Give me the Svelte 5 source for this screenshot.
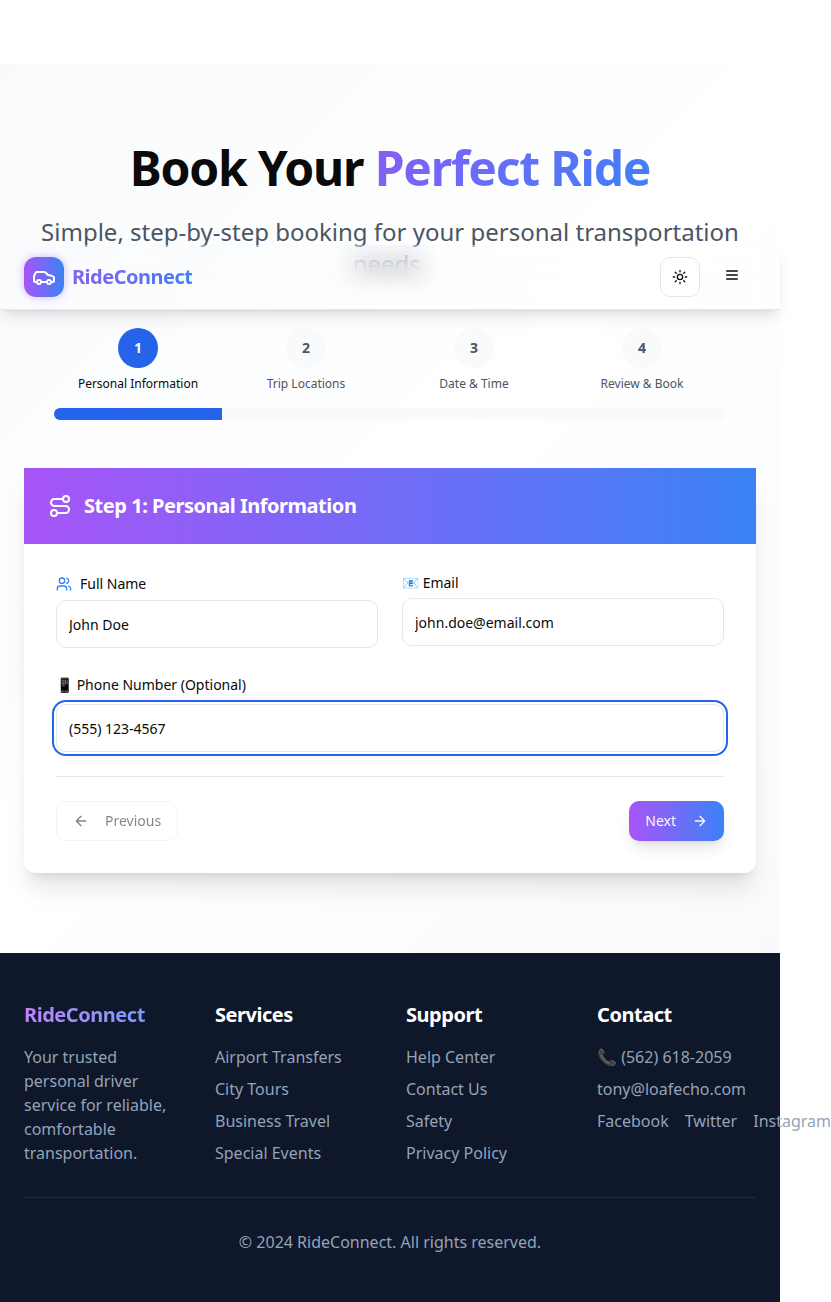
<script>
  const steps = ['Personal Information', 'Trip Locations', 'Date & Time', 'Review & Book'];
  const services = ['Airport Transfers', 'City Tours', 'Business Travel', 'Special Events'];
  const support = ['Help Center', 'Contact Us', 'Safety', 'Privacy Policy'];
  const social = ['Facebook', 'Twitter', 'Instagram'];
  let current = $state(1);
  let name = $state('John Doe');
  let email = $state('john.doe@email.com');
  let phone = $state('(555) 123-4567');
</script>

<div class="page">
  <nav>
    <a class="brand" href="#home">
      <span class="logo">
        <svg width="24" height="24" viewBox="0 0 24 24"><path d="M19 17h2c.6 0 1-.4 1-1v-3c0-.9-.7-1.7-1.5-1.9C18.7 10.6 16 10 16 10s-1.3-1.4-2.2-2.3c-.5-.4-1.1-.7-1.8-.7H5c-.6 0-1.1.4-1.4.9l-1.4 2.9A3.7 3.7 0 0 0 2 12v4c0 .6.4 1 1 1h2" /><circle cx="7" cy="17" r="2" /><path d="M9 17h6" /><circle cx="17" cy="17" r="2" /></svg>
      </span>
      <span class="gradient">RideConnect</span>
    </a>
    <div class="actions">
      <button class="theme" aria-label="Toggle theme">
        <svg width="16" height="16" viewBox="0 0 24 24"><circle cx="12" cy="12" r="4" /><path d="M12 2v2M12 20v2m-7.07-17.07 1.41 1.41m11.32 11.32 1.41 1.41M2 12h2M20 12h2M6.34 17.66l-1.41 1.41M19.07 4.93l-1.41 1.41" /></svg>
      </button>
      <button class="menu" aria-label="Open menu">
        <svg width="16" height="16" viewBox="0 0 24 24"><path d="M4 6h16M4 12h16M4 18h16" /></svg>
      </button>
    </div>
  </nav>

  <main>
    <header>
      <h1>Book Your <span class="gradient">Perfect Ride</span></h1>
      <p>Simple, step-by-step booking for your personal transportation needs.</p>
    </header>

    <div class="progress">
      <ol>
        {#each steps as step, i}
          <li class:active={i + 1 === current}>
            <span class="dot">{i + 1}</span>
            <span class="caption">{step}</span>
          </li>
        {/each}
      </ol>
      <div class="track"><div class="fill" style="width: {(current / steps.length) * 100}%"></div></div>
    </div>

    <section class="card">
      <div class="card-head">
        <svg width="24" height="24" viewBox="0 0 24 24"><circle cx="6" cy="19" r="3" /><path d="M9 19h8.5a3.5 3.5 0 0 0 0-7h-11a3.5 3.5 0 0 1 0-7H15" /><circle cx="18" cy="5" r="3" /></svg>
        <h2>Step {current}: {steps[current - 1]}</h2>
      </div>
      <div class="card-body">
        <div class="fields">
          <div class="field">
            <label for="name" class="with-icon">
              <svg width="16" height="16" viewBox="0 0 24 24"><path d="M16 21v-2a4 4 0 0 0-4-4H6a4 4 0 0 0-4 4v2" /><circle cx="9" cy="7" r="4" /><path d="M22 21v-2a4 4 0 0 0-3-3.87M16 3.13a4 4 0 0 1 0 7.75" /></svg>
              Full Name
            </label>
            <input id="name" bind:value={name} />
          </div>
          <div class="field">
            <label for="email">📧 Email</label>
            <input id="email" type="email" bind:value={email} />
          </div>
        </div>
        <div class="field phone">
          <div class="label-line"><label for="phone">📱 Phone Number (Optional)</label></div>
          <input id="phone" class="focused" type="tel" bind:value={phone} />
        </div>
        <div class="buttons">
          <button class="prev" disabled>
            <svg width="16" height="16" viewBox="0 0 24 24"><path d="m12 19-7-7 7-7M19 12H5" /></svg>
            Previous
          </button>
          <button class="next">
            Next
            <svg width="16" height="16" viewBox="0 0 24 24"><path d="M5 12h14M12 5l7 7-7 7" /></svg>
          </button>
        </div>
      </div>
    </section>
  </main>

  <footer>
    <div class="columns">
      <div>
        <h3 class="gradient light">RideConnect</h3>
        <p>Your trusted personal driver service for reliable, comfortable transportation.</p>
      </div>
      <div>
        <h3>Services</h3>
        <ul>{#each services as item}<li>{item}</li>{/each}</ul>
      </div>
      <div>
        <h3>Support</h3>
        <ul>{#each support as item}<li>{item}</li>{/each}</ul>
      </div>
      <div>
        <h3>Contact</h3>
        <ul>
          <li>📞 (562) 618-2059</li>
          <li>tony@loafecho.com</li>
          <li class="social">{#each social as item}<span>{item}</span>{/each}</li>
        </ul>
      </div>
    </div>
    <div class="legal">© 2024 RideConnect. All rights reserved.</div>
  </footer>
</div>

<style>
  :global(body) {
    background: #fff;
    overflow-x: hidden;
  }
  .page, .page * { box-sizing: border-box; }
  .page {
    position: relative;
    width: 780px;
    padding-top: 64px;
    font: 16px/24px "Noto Sans", sans-serif;
    color: #0a0a0a;
  }
  h1, h2, h3, p, ul, ol { margin: 0; padding: 0; list-style: none; }
  button, input { font: inherit; color: inherit; margin: 0; }
  svg {
    display: block;
    flex: none;
    fill: none;
    stroke: currentColor;
    stroke-width: 2;
    stroke-linecap: round;
    stroke-linejoin: round;
  }
  .gradient {
    background: linear-gradient(135deg, #8b5cf6, #3b82f6);
    background-clip: text;
    -webkit-background-clip: text;
    color: transparent;
  }
  h3.light { background-image: linear-gradient(90deg, #c084fc, #60a5fa); color: transparent; }

  nav {
    position: absolute;
    z-index: 10;
    top: 245px;
    left: 0;
    width: 780px;
    height: 65px;
    padding: 0 24px;
    display: flex;
    align-items: center;
    justify-content: space-between;
    border-bottom: 1px solid #e2e8f0;
    box-shadow: 0 10px 15px -3px rgb(0 0 0 / .1), 0 4px 6px -4px rgb(0 0 0 / .1);
  }
  nav::before {
    content: "";
    position: absolute;
    z-index: -1;
    inset: 0;
    background: rgb(255 255 255 / .1);
    backdrop-filter: blur(12px);
    mask-image: linear-gradient(rgb(0 0 0 / .86), rgb(0 0 0 / .91) 14px, #000 27px);
  }
  .brand {
    display: flex;
    align-items: center;
    gap: 8px;
    font-size: 20px;
    line-height: 28px;
    font-weight: 700;
    letter-spacing: -.025em;
    text-decoration: none;
  }
  .logo {
    display: grid;
    place-items: center;
    width: 40px;
    height: 40px;
    border-radius: 12px;
    color: #fff;
    background: linear-gradient(90deg, #a855f7, #3b82f6);
    box-shadow: 0 0 10px rgb(139 92 246 / .4);
  }
  .actions { display: flex; align-items: center; gap: 12px; padding-right: 4px; }
  .actions button {
    display: grid;
    place-items: center;
    width: 40px;
    height: 40px;
    padding: 0;
    border: 0;
    background: none;
  }
  .actions .theme { border: 1px solid #e2e8f0; border-radius: 10px; background: #fff; }
  .actions .menu { padding-bottom: 4px; }

  main {
    padding: 80px 24px;
    background: linear-gradient(135deg, #f8fafc, #fff 50%, #f8fafc);
  }
  header { text-align: center; margin-bottom: 48px; }
  h1 { font-size: 48px; line-height: 48px; font-weight: 700; letter-spacing: -.025em; margin-bottom: 24px; }
  header p { font-size: 24px; line-height: 32px; color: #4b5563; }

  .progress { width: 672px; margin: 0 auto 48px; }
  ol { display: grid; grid-template-columns: repeat(4, 1fr); margin-bottom: 16px; }
  ol li { display: flex; flex-direction: column; align-items: center; gap: 8px; color: #4b5563; }
  .dot {
    display: grid;
    place-items: center;
    width: 40px;
    height: 40px;
    border-radius: 50%;
    font-size: 14px;
    line-height: 20px;
    font-weight: 700;
    background: #f8fafc;
  }
  .caption { font-size: 12px; line-height: 16px; }
  .active .dot { background: #2563eb; color: #f8fafc; }
  .active .caption { color: #0a0a0a; }
  .track { height: 12px; border-radius: 6px; overflow: hidden; background: #f8fafc; }
  .fill { height: 100%; background: #2563eb; }

  .card { border-radius: 12px; background: #fff; box-shadow: 0 20px 25px -5px rgb(0 0 0 / .1), 0 8px 10px -6px rgb(0 0 0 / .1); }
  .card-head {
    display: flex;
    align-items: center;
    gap: 12px;
    padding: 24px;
    color: #fff;
    background: linear-gradient(90deg, #a855f7, #3b82f6);
  }
  h2 { font-size: 20px; line-height: 28px; font-weight: 700; letter-spacing: -.46px; }
  .card-body { padding: 32px; }
  .fields { display: grid; grid-template-columns: 1fr 1fr; gap: 24px; align-items: start; margin-bottom: 24px; }
  .field { display: flex; flex-direction: column; gap: 8px; }
  label { font-size: 14px; line-height: 14px; height: 14px; }
  .with-icon { display: flex; align-items: center; gap: 8px; height: 16px; }
  .with-icon svg { color: #3b82f6; }
  .label-line { height: 24px; }
  input {
    width: 100%;
    height: 48px;
    padding: 8px 12px;
    border: 1px solid #e2e8f0;
    border-radius: 10px;
    outline: none;
    font-size: 14px;
    line-height: 20px;
    background: #fff;
  }
  .focused { box-shadow: 0 0 0 2px #fff, 0 0 0 4px #2563eb; }
  .buttons {
    display: flex;
    justify-content: space-between;
    margin-top: 24px;
    padding-top: 24px;
    border-top: 1px solid #e2e8f0;
  }
  .buttons button {
    display: flex;
    align-items: center;
    gap: 16px;
    height: 40px;
    padding: 0 16px;
    border: 0;
    border-radius: 10px;
    font-size: 14px;
    line-height: 20px;
  }
  .buttons .prev { border: 1px solid #e2e8f0; background: #fff; opacity: .5; }
  .buttons .next {
    color: #f8fafc;
    background: linear-gradient(90deg, #a855f7, #3b82f6);
    box-shadow: 0 10px 15px -3px rgb(0 0 0 / .1), 0 4px 6px -4px rgb(0 0 0 / .1);
  }

  footer { padding: 48px 24px; background: #0f172a; color: #94a3b8; }
  .columns { display: grid; grid-template-columns: repeat(4, minmax(0, 1fr)); gap: 32px; }
  h3 { margin-bottom: 16px; font-size: 20px; line-height: 28px; font-weight: 700; letter-spacing: -.46px; color: #fff; }
  ul { display: flex; flex-direction: column; gap: 8px; }
  ul li { white-space: nowrap; }
  .social { display: flex; gap: 16px; }
  .legal { margin-top: 32px; padding-top: 32px; border-top: 1px solid #1e293b; text-align: center; }
</style>
